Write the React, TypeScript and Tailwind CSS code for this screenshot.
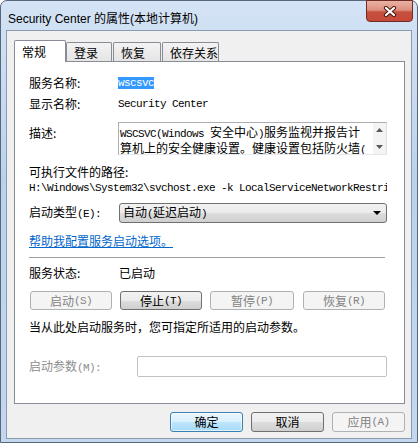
import React from "react";

const mono = "font-['Liberation_Mono',monospace] text-[11px] tracking-[-0.6px]";

const btnNormal =
  "h-[19px] rounded-[3px] border border-[#707070] bg-[linear-gradient(#f2f2f2_0%,#ebebeb_50%,#dddddd_51%,#cfcfcf_100%)] text-black flex items-center justify-center";
const btnDisabled =
  "h-[19px] rounded-[3px] border border-[#adb2b5] bg-[#f4f4f4] text-[#838383] flex items-center justify-center";

const M = ({ children }: { children: React.ReactNode }) => <span className={mono}>{children}</span>;

const Tab = ({ label, w, active }: { label: string; w: string; active?: boolean }) =>
  active ? (
    <div className={`${w} h-[22px] relative z-10 bg-white border border-b-0 border-[#898c95] rounded-t-[2px] flex items-start pl-[7px] pt-[3px]`}>
      {label}
    </div>
  ) : (
    <div className={`${w} h-[20px] bg-[linear-gradient(#f3f3f3,#e4e4e4)] border border-b-0 border-[#898c95] rounded-t-[2px] flex items-start pl-[7px] pt-[2px]`}>
      {label}
    </div>
  );

export default function App() {
  return (
    <div className="w-[420px] h-[443px] bg-white font-['Noto_Sans_CJK_SC',sans-serif] text-[12px] leading-[16px] text-black">
      <div className="w-[418px] h-full rounded-t-[7px] border border-[#59677a] bg-[linear-gradient(to_bottom,#d4e3f5,#bcd2ec_40%,#c3d7ef)] flex flex-col px-[5px] pb-[3px]">
        {/* title bar */}
        <div className="h-[29px] flex items-start justify-between">
          <div className="pt-[10px] pl-[2px] font-['Liberation_Sans','Noto_Sans_CJK_SC',sans-serif] text-[12px]">
            Security Center 的属性(本地计算机)
          </div>
          <div className="w-[47px] h-[22px] mt-[-1px] mr-[-1px] rounded-b-[4px] border border-[#6d2b22] bg-[linear-gradient(#eab1a4_0%,#dd907f_45%,#c5503d_55%,#c7483a_100%)] flex items-center justify-center">
            <svg width="14" height="11" viewBox="0 0 14 11">
              <path d="M3 2 L11 9 M11 2 L3 9" stroke="#4b1710" strokeWidth="4.2" strokeLinecap="round" />
              <path d="M3 2 L11 9 M11 2 L3 9" stroke="#ffffff" strokeWidth="2.2" strokeLinecap="round" />
            </svg>
          </div>
        </div>

        {/* client area */}
        <div className="flex-1 border border-[#8a9bb0] bg-[#f0f0f0] flex flex-col pl-[7px] pr-[6px] pt-[9px] pb-[6px]">
          <div className="flex items-end h-[22px] mb-[-1px]">
            <Tab label="常规" w="w-[52px]" active />
            <Tab label="登录" w="w-[46px]" />
            <div className="w-[1px]" />
            <Tab label="恢复" w="w-[48px]" />
            <div className="w-[1px]" />
            <Tab label="依存关系" w="w-[57px]" />
          </div>

          <div className="h-[343px] bg-white border border-[#898c95] pl-[14px] pr-[17px] flex flex-col">
            <div className="mt-[12px] h-[18px] flex items-center">
              <div className="w-[89px]">服务名称:</div>
              <span className={`${mono} bg-[#3399ff] text-white leading-[12px]`}>wscsvc</span>
            </div>
            <div className="mt-[3px] h-[18px] flex items-center">
              <div className="w-[89px]">显示名称:</div>
              <M>Security Center</M>
            </div>
            <div className="mt-[9px] flex items-start">
              <div className="w-[89px] pt-[3px]">描述:</div>
              <div className="flex-1 h-[33px] border border-[#abadb3] border-r-[#dbdfe6] border-b-[#e3e9ef] flex">
                <div className="flex-1 overflow-hidden whitespace-nowrap pl-[1px] pt-[2px] leading-[13px]">
                  <div>
                    <M>WSCSVC(Windows </M>安全中心<M>)</M>服务监视并报告计
                  </div>
                  <div>
                    算机上的安全健康设置。健康设置包括防火墙<M>(</M>
                  </div>
                </div>
                <div className="w-[13px] bg-[#f4f4f4] flex flex-col items-center justify-between py-[5px]">
                  <svg width="7" height="4" viewBox="0 0 7 4">
                    <path d="M3.5 0 L7 4 L0 4 Z" fill="#5a5a5a" />
                  </svg>
                  <svg width="7" height="4" viewBox="0 0 7 4">
                    <path d="M0 0 L7 0 L3.5 4 Z" fill="#5a5a5a" />
                  </svg>
                </div>
              </div>
            </div>
            <div className="mt-[9px] h-[16px]">可执行文件的路径:</div>
            <div className="h-[16px] flex items-center whitespace-nowrap overflow-hidden">
              <M>H:\Windows\System32\svchost.exe -k LocalServiceNetworkRestri</M>
            </div>
            <div className="mt-[7px] flex items-center">
              <div className="w-[90px]">
                启动类型<M>(E):</M>
              </div>
              <div className="flex-1 h-[20px] rounded-[3px] border border-[#707070] bg-[linear-gradient(#f2f2f2_0%,#ebebeb_50%,#dddddd_51%,#cfcfcf_100%)] flex items-center justify-between pl-[3px] pr-[5px]">
                <span>
                  自动<M>(</M>延迟启动<M>)</M>
                </span>
                <svg width="8" height="4" viewBox="0 0 8 4">
                  <path d="M0 0 L8 0 L4 4 Z" fill="#000" />
                </svg>
              </div>
            </div>
            <div className="mt-[10px] h-[16px]">
              <span className="text-[#0066cc] underline">帮助我配置服务启动选项。</span>
            </div>
            <div className="mt-[8px] h-[1px] bg-[#a0a0a0] mr-[2px]" />
            <div className="mt-[7px] h-[16px] flex items-center">
              <div className="w-[90px]">服务状态:</div>
              <div>已启动</div>
            </div>
            <div className="mt-[10px] flex ml-[1px]">
              <div className={`${btnDisabled} w-[82px]`}>
                启动<M>(S)</M>
              </div>
              <div className={`${btnNormal} w-[82px] ml-[8px]`}>
                停止<M>(T)</M>
              </div>
              <div className={`${btnDisabled} w-[84px] ml-[8px]`}>
                暂停<M>(P)</M>
              </div>
              <div className={`${btnDisabled} w-[82px] ml-[9px]`}>
                恢复<M>(R)</M>
              </div>
            </div>
            <div className="mt-[9px] h-[16px]">当从此处启动服务时，您可指定所适用的启动参数。</div>
            <div className="mt-[21px] flex items-center">
              <div className="w-[108px] text-[#8d8d8d]">
                启动参数<M>(M):</M>
              </div>
              <div className="flex-1 h-[21px] rounded-[2px] border border-[#c2c2c2] bg-white" />
            </div>
          </div>

          <div className="mt-[8px] flex justify-end gap-[8px]">
            <div className="w-[73px] h-[20px] rounded-[3px] border border-[#3c7fb1] bg-[linear-gradient(#eaf6fd_0%,#d9f0fc_50%,#bee6fd_51%,#a7d9f5_100%)] shadow-[inset_0_0_0_1px_#ffffffa0] flex items-center justify-center">
              确定
            </div>
            <div className={`${btnNormal} w-[73px] h-[20px]`}>取消</div>
            <div className={`${btnDisabled} w-[73px] h-[20px]`}>
              应用<M>(A)</M>
            </div>
          </div>
        </div>
      </div>
    </div>
  );
}
